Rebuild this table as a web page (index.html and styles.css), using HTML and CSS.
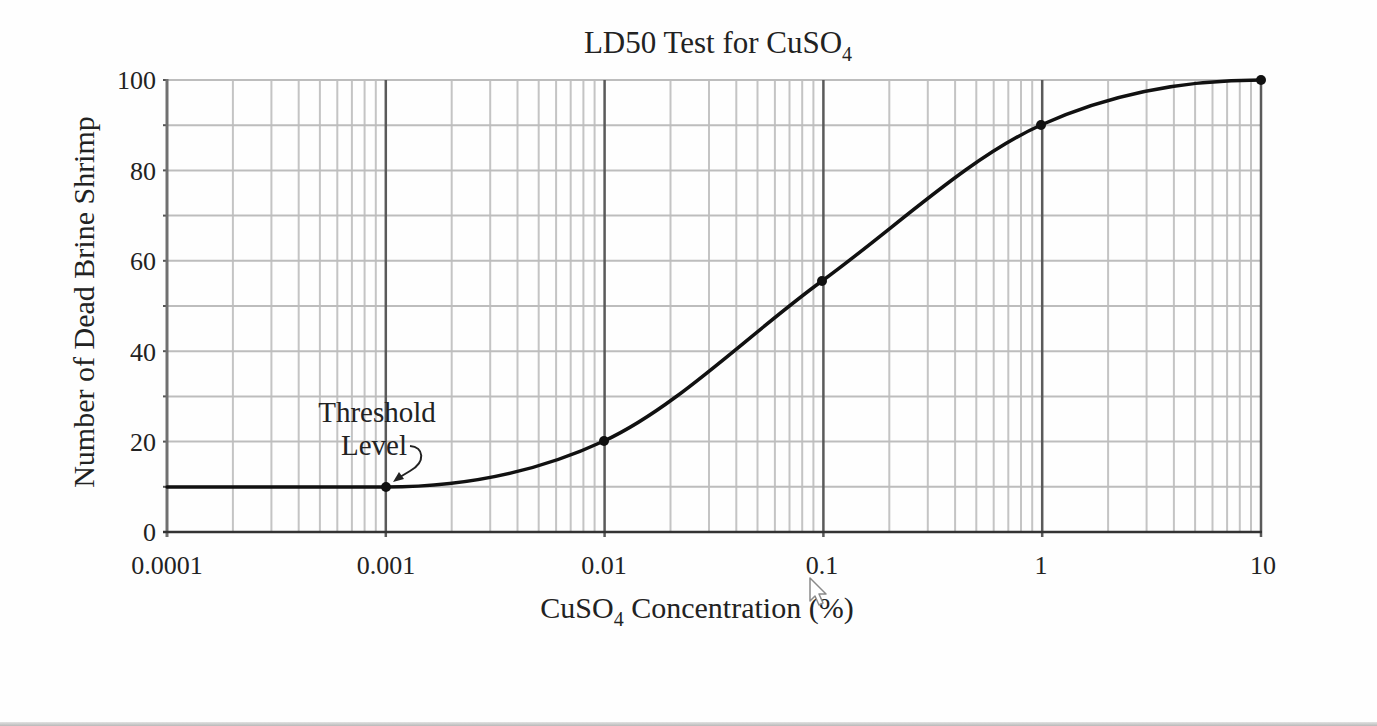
FILE: index.html
```html
<!DOCTYPE html>
<html lang="en">
<head>
<meta charset="utf-8">
<title>LD50 Test for CuSO4</title>
<link rel="stylesheet" href="styles.css">
</head>
<body>
<div class="page">
  <svg class="chart" width="1377" height="722" viewBox="0 0 1377 722" xmlns="http://www.w3.org/2000/svg">
    <defs>
      <g id="dec">
        <line x1="65.9" y1="80" x2="65.9" y2="532"/>
        <line x1="104.4" y1="80" x2="104.4" y2="532"/>
        <line x1="131.7" y1="80" x2="131.7" y2="532"/>
        <line x1="152.9" y1="80" x2="152.9" y2="532"/>
        <line x1="170.3" y1="80" x2="170.3" y2="532"/>
        <line x1="184.9" y1="80" x2="184.9" y2="532"/>
        <line x1="197.6" y1="80" x2="197.6" y2="532"/>
        <line x1="208.8" y1="80" x2="208.8" y2="532"/>
      </g>
    </defs>

    <g class="minor">
      <use href="#dec" x="167"/>
      <use href="#dec" x="385.8"/>
      <use href="#dec" x="604.6"/>
      <use href="#dec" x="823.4"/>
      <use href="#dec" x="1042.2"/>
    </g>

    <g class="hgrid">
      <line x1="167" y1="80" x2="1261" y2="80"/>
      <line x1="167" y1="125.2" x2="1261" y2="125.2"/>
      <line x1="167" y1="170.4" x2="1261" y2="170.4"/>
      <line x1="167" y1="215.6" x2="1261" y2="215.6"/>
      <line x1="167" y1="260.8" x2="1261" y2="260.8"/>
      <line x1="167" y1="306" x2="1261" y2="306"/>
      <line x1="167" y1="351.2" x2="1261" y2="351.2"/>
      <line x1="167" y1="396.4" x2="1261" y2="396.4"/>
      <line x1="167" y1="441.6" x2="1261" y2="441.6"/>
      <line x1="167" y1="486.8" x2="1261" y2="486.8"/>
    </g>

    <g class="major">
      <line x1="385.8" y1="80" x2="385.8" y2="537"/>
      <line x1="604.6" y1="80" x2="604.6" y2="537"/>
      <line x1="823.4" y1="80" x2="823.4" y2="537"/>
      <line x1="1042.2" y1="80" x2="1042.2" y2="537"/>
      <line x1="1261" y1="80" x2="1261" y2="537"/>
    </g>

    <g class="yticks">
      <line x1="163" y1="80" x2="168" y2="80"/>
      <line x1="163" y1="125.2" x2="168" y2="125.2"/>
      <line x1="163" y1="170.4" x2="168" y2="170.4"/>
      <line x1="163" y1="215.6" x2="168" y2="215.6"/>
      <line x1="163" y1="260.8" x2="168" y2="260.8"/>
      <line x1="163" y1="306" x2="168" y2="306"/>
      <line x1="163" y1="351.2" x2="168" y2="351.2"/>
      <line x1="163" y1="396.4" x2="168" y2="396.4"/>
      <line x1="163" y1="441.6" x2="168" y2="441.6"/>
      <line x1="163" y1="486.8" x2="168" y2="486.8"/>
      <line x1="163" y1="532" x2="168" y2="532"/>
    </g>

    <line class="yaxis" x1="167" y1="79" x2="167" y2="537"/>
    <line class="xaxis" x1="163" y1="532" x2="1262" y2="532"/>

    <path class="curve" d="M167 487 L386 487 C459 487 531 475 604 441 C677 407 749 334 822 281 C895 228 968 158 1041 125 C1114 92 1188 80 1261 80"/>

    <g class="dots">
      <circle cx="386" cy="487" r="5"/>
      <circle cx="604" cy="441" r="5"/>
      <circle cx="822" cy="281" r="5"/>
      <circle cx="1041" cy="125" r="5"/>
      <circle cx="1261" cy="80" r="5"/>
    </g>

    <text class="title" x="718" y="53">LD50 Test for CuSO<tspan class="sub" dy="8">4</tspan></text>

    <g class="ylabels">
      <text x="156" y="89">100</text>
      <text x="156" y="180">80</text>
      <text x="156" y="270">60</text>
      <text x="156" y="361">40</text>
      <text x="156" y="451">20</text>
      <text x="156" y="541">0</text>
    </g>

    <g class="xlabels">
      <text x="167" y="574">0.0001</text>
      <text x="386" y="574">0.001</text>
      <text x="604" y="574">0.01</text>
      <text x="822" y="574">0.1</text>
      <text x="1041" y="574">1</text>
      <text x="1263" y="574">10</text>
    </g>

    <text class="axis-title" x="697" y="618">CuSO<tspan class="sub" dy="8">4</tspan><tspan dy="-8"> Concentration (%)</tspan></text>
    <text class="axis-title" transform="translate(94 302) rotate(-90)" x="0" y="0">Number of Dead Brine Shrimp</text>

    <g class="note">
      <text x="377" y="422">Threshold</text>
      <text x="374" y="455">Level</text>
    </g>
    <path class="leader" d="M410 446 C424 447 426 462 410 471 L400 477"/>
    <path class="arrowhead" d="M393 482 L399 472 L404 479 Z"/>

    <path class="cursor" d="M810 578 L810 601 L815 596 L819 605 L823 603 L819 594 L826 594 Z"/>
  </svg>
  <div class="bar"></div>
</div>
</body>
</html>
```

FILE: styles.css
```css
html, body {
  margin: 0;
  padding: 0;
  background: #ffffff;
}

.page {
  width: 1377px;
  height: 726px;
  overflow: hidden;
  display: flex;
  flex-direction: column;
  background: #fefefe;
}

.chart {
  display: block;
  flex: none;
  font-family: "Liberation Serif", "Times New Roman", serif;
  fill: #222;
}

.minor {
  stroke: #c4c4c4;
  stroke-width: 2;
}

.hgrid line {
  stroke: #bdbdbd;
  stroke-width: 2;
}

.major line {
  stroke: #5a5a5a;
  stroke-width: 2.5;
}

.yticks line {
  stroke: #555;
  stroke-width: 2;
}

.yaxis {
  stroke: #707070;
  stroke-width: 3;
}

.xaxis {
  stroke: #333;
  stroke-width: 2.5;
}

.curve {
  fill: none;
  stroke: #111;
  stroke-width: 3.5;
  stroke-linecap: round;
  stroke-linejoin: round;
}

.dots circle {
  fill: #111;
}

.title {
  font-size: 31px;
  text-anchor: middle;
}

.sub {
  font-size: 20px;
}

.ylabels text {
  font-size: 26px;
  text-anchor: end;
}

.xlabels text {
  font-size: 26px;
  text-anchor: middle;
}

.axis-title {
  font-size: 30px;
  text-anchor: middle;
}

.note text {
  font-size: 29px;
  text-anchor: middle;
}

.leader {
  fill: none;
  stroke: #222;
  stroke-width: 2;
}

.arrowhead {
  fill: #222;
}

.cursor {
  fill: #ffffff;
  stroke: #8a8a8a;
  stroke-width: 1.5;
  stroke-linejoin: round;
}

.bar {
  flex: none;
  height: 4px;
  background: linear-gradient(#e2e2e2, #b9b9b9);
}
```
